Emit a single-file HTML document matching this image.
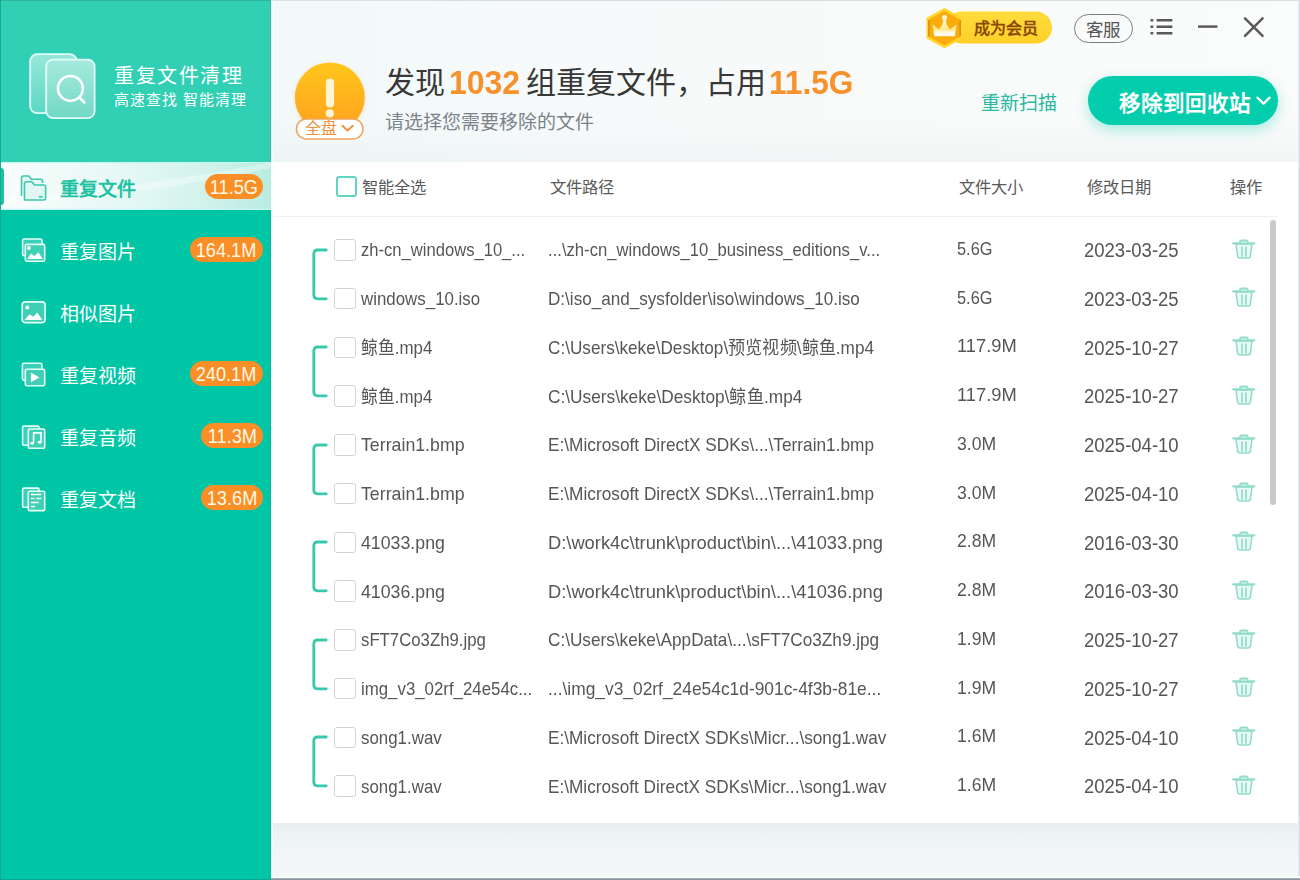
<!DOCTYPE html>
<html lang="zh-CN"><head><meta charset="utf-8">
<style>
*{margin:0;padding:0;box-sizing:border-box}
html,body{width:1300px;height:880px;overflow:hidden;font-family:"Liberation Sans",sans-serif}
body{position:relative;background:#f2f7f8}
.abs{position:absolute}
.t{position:absolute;white-space:nowrap;line-height:1}
.cb{position:absolute;width:21.5px;height:21.5px;border:1.2px solid #d4d4d4;border-radius:3px;background:#fff}
.badge{position:absolute;height:25px;border-radius:13px;background:#f98f26;color:#fff9e6;font-size:18px;line-height:25px;text-align:center}
.sy{transform:scaleY(1.07);transform-origin:0 0}
.badge span{display:inline-block;transform:translateY(1px) scale(1.01,1.1)}
.nav{position:absolute;left:60px;font-size:19px;color:#fff;line-height:1;white-space:nowrap}
</style></head><body>

<div class="abs" style="left:271px;top:0;width:1029px;height:162px;background:linear-gradient(90deg,#f2f9fa 0%,#f7fafa 35%,#f9fafa 70%,#fafbfb 100%)"></div>
<div class="abs" style="left:271px;top:120px;width:1029px;height:42px;background:linear-gradient(180deg,rgba(230,236,236,0) 0%,rgba(228,234,234,.3) 100%)"></div>
<div class="abs" style="left:271px;top:822px;width:1029px;height:58px;background:linear-gradient(180deg,#e8eef0 0%,#eef3f4 25%,#f2f6f7 60%,#f3f7f8 100%)"></div>
<div class="abs" style="left:271px;top:0;width:2px;height:880px;background:#fbfefe"></div>
<div class="abs" style="left:0;top:0;width:271px;height:880px;background:#01c6a6"></div>
<div class="abs" style="left:0;top:0;width:271px;height:162px;background:#31cfb4"></div>
<div class="abs" style="left:269.5px;top:0;width:1.5px;height:880px;background:rgba(0,120,100,.12)"></div>
<svg class="abs" style="left:26px;top:50px" width="74" height="74" viewBox="26 50 74 74">
<defs><linearGradient id="lg1" x1="0" y1="0" x2="0" y2="1"><stop offset="0" stop-color="#ffffff" stop-opacity=".5"/><stop offset="1" stop-color="#ffffff" stop-opacity=".2"/></linearGradient>
<linearGradient id="lg2" x1="0" y1="0" x2="0" y2="1"><stop offset="0" stop-color="#a6eadd"/><stop offset="1" stop-color="#72d9c6"/></linearGradient></defs>
<rect x="30.2" y="54.2" width="46.5" height="59" rx="7" fill="url(#lg1)" stroke="#dffff7" stroke-width="1.8"/>
<rect x="46.2" y="59.6" width="48.4" height="58.6" rx="7" fill="url(#lg2)" stroke="#e2fff8" stroke-width="1.8"/>
<circle cx="70.4" cy="88.4" r="12.4" fill="none" stroke="#fff" stroke-width="2.6"/>
<path d="M79.6 97.6 L84.2 102.4" stroke="#fff" stroke-width="2.8" stroke-linecap="round"/>
</svg>
<div class="t" style="left:114px;top:66px;font-size:20px;color:#fff;letter-spacing:1.5px;font-weight:500">重复文件清理</div>
<div class="t" style="left:114px;top:91.5px;font-size:15px;color:#fff;letter-spacing:1px;font-weight:500">高速查找 智能清理</div>
<div class="abs" style="left:0;top:162px;width:271px;height:48px;background:linear-gradient(90deg,#f8fdfc 0%,#e6f8f4 45%,#d2f3ec 75%,#b9ece1 100%)"></div>
<svg class="abs" style="left:0;top:162px" width="271" height="48" viewBox="0 0 271 48"><path d="M0 36 Q140 26 271 0 L271 6 Q150 32 0 44 Z" fill="#ffffff" opacity=".35"/><rect x="0" y="0" width="271" height="1.2" fill="#c9f6ee"/><rect x="0" y="46.8" width="271" height="1.2" fill="#c9f6ee"/></svg>
<div class="abs" style="left:0;top:168px;width:4px;height:37px;background:#1fbfa2;border-radius:0 3px 3px 0"></div>
<svg class="abs" style="left:19px;top:173px" width="30" height="30" viewBox="19 173 30 30">
<path d="M21.5 196 V178.3 Q21.5 176 23.5 176 H28.8 L31.5 179.3 H41 Q42.6 179.3 42.6 181 V183" fill="#e6f8f4" stroke="#3dc9ae" stroke-width="1.6" stroke-linejoin="round"/>
<path d="M24.5 200 V184 Q24.5 181.7 26.5 181.7 H31.8 L34.5 185 H44 Q45.6 185 45.6 186.7 V198.3 Q45.6 200 44 200 Z" fill="#e2f7f2" stroke="#3dc9ae" stroke-width="1.6" stroke-linejoin="round"/>
<path d="M38.8 196.8 H42.6" stroke="#3dc9ae" stroke-width="1.8"/>
</svg>
<div class="nav" style="top:180px;color:#1ec2a3;font-weight:bold">重复文件</div>
<div class="badge" style="left:205px;top:174px;width:58px"><span>11.5G</span></div>
<div class="nav" style="top:242.5px">重复图片</div>
<div class="badge" style="left:190px;top:237px;width:73px"><span>164.1M</span></div>
<div class="nav" style="top:304.5px">相似图片</div>
<div class="nav" style="top:366.5px">重复视频</div>
<div class="badge" style="left:190px;top:361px;width:73px"><span>240.1M</span></div>
<div class="nav" style="top:428.5px">重复音频</div>
<div class="badge" style="left:201px;top:423px;width:62px"><span>11.3M</span></div>
<div class="nav" style="top:490.5px">重复文档</div>
<div class="badge" style="left:201px;top:485px;width:62px"><span>13.6M</span></div>
<svg class="abs" style="left:18px;top:234px" width="32" height="32" viewBox="18 234 32 32">
<rect x="22.6" y="239" width="19.4" height="16.8" rx="1.6" stroke="#e4fff8" stroke-width="1.6" fill="rgba(255,255,255,.22)"/>
<rect x="25.3" y="244.4" width="19.4" height="16.8" rx="1.6" fill="#3fcfb4" stroke="#e4fff8" stroke-width="1.6"/>
<circle cx="28.9" cy="248" r="1.9" fill="#fff"/>
<path d="M27.3 259 L31.1 253.6 L34.5 256 L38.4 252.3 L42.7 259 Z" fill="#fff"/>
</svg>
<svg class="abs" style="left:18px;top:297px" width="32" height="30" viewBox="18 297 32 30">
<rect x="22.2" y="301.9" width="22.9" height="20.7" rx="3" fill="#3fcfb4" stroke="#e4fff8" stroke-width="1.6"/>
<circle cx="27.3" cy="307.5" r="2" fill="#fff"/>
<path d="M24.5 320 L29.5 314.3 L33.2 316.8 L37.3 312.5 L42.3 320 Z" fill="#fff"/>
</svg>
<svg class="abs" style="left:18px;top:358px" width="32" height="32" viewBox="18 358 32 32">
<rect x="22.4" y="363.3" width="19.5" height="17" rx="1.6" stroke="#e4fff8" stroke-width="1.6" fill="rgba(255,255,255,.22)"/>
<rect x="25.3" y="369.2" width="19.4" height="16.6" rx="1.6" fill="#3fcfb4" stroke="#e4fff8" stroke-width="1.6"/>
<path d="M30.9 372.6 L39.5 377.4 L30.9 382.2 Z" fill="#fff"/>
</svg>
<svg class="abs" style="left:18px;top:420px" width="32" height="32" viewBox="18 420 32 32">
<rect x="22.6" y="426.1" width="16.4" height="19.1" rx="1.4" stroke="#e4fff8" stroke-width="1.6" fill="rgba(255,255,255,.22)"/>
<rect x="28.3" y="429" width="16.4" height="19.3" rx="1.4" fill="#3fcfb4" stroke="#e4fff8" stroke-width="1.6"/>
<path d="M33.6 442.6 V432.9 H41 V441.8" fill="none" stroke="#fff" stroke-width="1.6"/>
<ellipse cx="32.1" cy="443.2" rx="1.9" ry="1.5" fill="#fff"/>
<ellipse cx="39.6" cy="442.3" rx="1.9" ry="1.5" fill="#fff"/>
</svg>
<svg class="abs" style="left:18px;top:482px" width="32" height="32" viewBox="18 482 32 32">
<rect x="22.6" y="488.1" width="16.4" height="19.1" rx="1.4" stroke="#e4fff8" stroke-width="1.6" fill="rgba(255,255,255,.22)"/>
<rect x="28.3" y="491.3" width="16.4" height="19.3" rx="1.4" fill="#3fcfb4" stroke="#e4fff8" stroke-width="1.6"/>
<path d="M31 494.6 H41.2 M31 498.5 H34.5 M36.4 498.5 H41.2 M31 502.6 H38.8 M31 506.6 H35" stroke="#fff" stroke-width="1.5"/>
</svg>
<svg class="abs" style="left:285px;top:52px" width="90" height="92" viewBox="285 52 90 92">
<defs>
<linearGradient id="og" x1="0" y1="0" x2="0" y2="1"><stop offset="0" stop-color="#ffc61c"/><stop offset="1" stop-color="#ffa01e"/></linearGradient>
<filter id="sh" x="-30%%" y="-30%%" width="160%%" height="160%%"><feGaussianBlur stdDeviation="2.5"/></filter>
</defs>
<circle cx="330" cy="98.5" r="35.5" fill="#f3c9a0" opacity=".35" filter="url(#sh)"/>
<circle cx="329.8" cy="97.4" r="35" fill="url(#og)"/>
<rect x="325.9" y="78.5" width="8.2" height="29" rx="4.1" fill="#fff4d6"/>
<circle cx="329.8" cy="113.4" r="4.1" fill="#fff4d6"/>
<rect x="296.4" y="118.9" width="66.6" height="20" rx="10" fill="#fff" stroke="#f0a458" stroke-width="1.5"/>
<path d="M342.4 125.8 L347.6 130.6 L352.8 125.8" fill="none" stroke="#ec9442" stroke-width="2" stroke-linecap="round" stroke-linejoin="round"/>
</svg>
<div class="t" style="left:305px;top:121px;font-size:16px;color:#ea9440">全盘</div>
<div class="t" style="left:385px;top:67.5px;font-size:30px;color:#383838">发现</div>
<div class="t" style="left:449px;top:65px;font-size:34px;color:#f7912b;font-weight:bold;transform:scaleX(.94);transform-origin:0 0">1032</div>
<div class="t" style="left:526px;top:67.5px;font-size:30px;color:#383838">组重复文件，占用</div>
<div class="t" style="left:769px;top:64.5px;font-size:34px;color:#f7912b;font-weight:bold;transform:scaleX(.93);transform-origin:0 0">11.5G</div>
<div class="t" style="left:385px;top:113px;font-size:19px;color:#7c838b">请选择您需要移除的文件</div>
<svg class="abs" style="left:922px;top:5px" width="134" height="46" viewBox="922 5 134 46">
<defs><linearGradient id="yg" x1="0" y1="0" x2="0" y2="1"><stop offset="0" stop-color="#ffdc3c"/><stop offset="1" stop-color="#fdd028"/></linearGradient>
<linearGradient id="cg" x1="0" y1="0" x2="0" y2="1"><stop offset="0" stop-color="#fff6d0"/><stop offset=".55" stop-color="#ffe98a"/><stop offset=".75" stop-color="#fffbea"/><stop offset="1" stop-color="#fffdf2"/></linearGradient></defs>
<rect x="946" y="11.5" width="106" height="32" rx="16" fill="url(#yg)"/>
<path d="M944.5 9.5 L961.2 18.6 V37.6 L944.5 46.8 L927.8 37.6 V18.6 Z" fill="#fbac0a" stroke="#ffd52e" stroke-width="2.6" stroke-linejoin="round"/>
<path d="M928.8 20 V36.4 M960.2 20 V36.4" stroke="#c77a08" stroke-width="1.3" opacity=".8"/>
<path d="M932.6 24.6 L939 29.4 L944.5 21.5 L950 29.4 L956.6 24.6 L954.8 36.2 H934.3 Z" fill="url(#cg)"/>
<path d="M943.2 18.5 L942.6 24 H946.4 L945.8 18.5 Z" fill="#fff6d0"/>
<circle cx="944.5" cy="17.6" r="2.5" fill="#fff6d0"/>
</svg>
<div class="t" style="left:974px;top:20.5px;font-size:16px;color:#8c4a08;font-weight:bold">成为会员</div>
<div class="abs" style="left:1074px;top:14px;width:58.5px;height:29px;border:1.8px solid #7d7d7d;border-radius:15px"></div>
<div class="t" style="left:1085.5px;top:21.5px;font-size:17.5px;color:#555">客服</div>
<svg class="abs" style="left:1146px;top:12px" width="124" height="30" viewBox="1146 12 124 30">
<path d="M1150.5 20.2 H1153.3 M1150.5 26.7 H1153.3 M1150.5 33.2 H1153.3" stroke="#5a5a5a" stroke-width="2.5"/>
<path d="M1156.6 20.2 H1172.4 M1156.6 26.7 H1172.4 M1156.6 33.2 H1172.4" stroke="#5a5a5a" stroke-width="2.5"/>
<path d="M1198 26.6 H1217.4" stroke="#5a5a5a" stroke-width="2.5"/>
<path d="M1245 18.3 L1262.6 35.8 M1262.6 18.3 L1245 35.8" stroke="#5a5a5a" stroke-width="2.5" stroke-linecap="round"/>
</svg>
<div class="t" style="left:981px;top:93.5px;font-size:19px;color:#2ab8a0">重新扫描</div>
<div class="abs" style="left:1088px;top:76px;width:190px;height:49px;border-radius:25px;background:#03cdac;box-shadow:0 5px 14px rgba(0,205,172,.33)"></div>
<div class="t" style="left:1119px;top:94px;font-size:21.5px;color:#fff;font-weight:bold">移除到回收站</div>
<svg class="abs" style="left:1254px;top:94px" width="20" height="14" viewBox="1254 94 20 14">
<path d="M1257.4 97.6 L1263.5 103.6 L1269.6 97.6" fill="none" stroke="#fff" stroke-width="2.2" stroke-linecap="round" stroke-linejoin="round"/>
</svg>
<div class="abs" style="left:273px;top:162px;width:1025px;height:661px;background:#fff"></div>
<div class="abs" style="left:273px;top:216px;width:1005px;height:1px;background:#f0f2f2"></div>
<div class="abs" style="left:336px;top:176px;width:21px;height:21px;border:2px solid #62d5c0;border-radius:3px;background:#fff"></div>
<div class="t" style="left:362px;top:179px;font-size:16.3px;color:#595959">智能全选</div>
<div class="t" style="left:550px;top:179px;font-size:16.3px;color:#595959">文件路径</div>
<div class="t" style="left:959px;top:179px;font-size:16.3px;color:#595959">文件大小</div>
<div class="t" style="left:1087px;top:179px;font-size:16.3px;color:#595959">修改日期</div>
<div class="t" style="left:1230px;top:179px;font-size:16.3px;color:#595959">操作</div>
<div class="abs" style="left:1270px;top:220px;width:6px;height:285px;border-radius:3px;background:#c9c9c9"></div>
<div class="cb" style="left:334px;top:239.1px"></div>
<div class="t" style="left:361px;top:241.3px;font-size:17px;color:#565656;transform:scale(0.976,1.07);transform-origin:0 0">zh-cn_windows_10_...</div>
<div class="t" style="left:548px;top:241.3px;font-size:17px;color:#565656;transform:scale(0.98,1.07);transform-origin:0 0">...\zh-cn_windows_10_business_editions_v...</div>
<div class="t" style="left:957px;top:239.8px;font-size:16.5px;color:#565656;transform:scale(0.991,1.07);transform-origin:0 0">5.6G</div>
<div class="t sy" style="left:1084px;top:241.0px;font-size:18.5px;color:#565656">2023-03-25</div>
<svg class="abs" style="left:1231px;top:237px" width="26" height="24" viewBox="0 0 26 24">
<path d="M4 9 L5.6 21 Q6 23 8 23 L16 23 Q18 23 18.4 21 L20 9 Z" transform="translate(1,-2)" fill="#e9fbf7" stroke="#93dbca" stroke-width="1.6" stroke-linejoin="round"/>
<path d="M2.2 6.3 H23.3" stroke="#93dbca" stroke-width="2.2" stroke-linecap="round"/>
<path d="M9 6 V4.6 Q9 3.3 10.3 3.3 H15.4 Q16.7 3.3 16.7 4.6 V6" fill="#b9ece0" stroke="#93dbca" stroke-width="1.6"/>
<path d="M11 10 V19 M14.9 10 V19" stroke="#93dbca" stroke-width="1.7" stroke-linecap="round"/>
</svg>
<svg class="abs" style="left:308px;top:246.6px" width="24" height="54.8" viewBox="0 0 24 54.8"><path d="M18.2 3 H9.5 Q5.8 3 5.8 6.8 V48.0 Q5.8 51.8 9.5 51.8 H18.2" fill="none" stroke="#3ac8ac" stroke-width="2.8" stroke-linecap="round"/></svg>
<div class="cb" style="left:334px;top:287.9px"></div>
<div class="t" style="left:361px;top:290.1px;font-size:17px;color:#565656;transform:scale(0.993,1.07);transform-origin:0 0">windows_10.iso</div>
<div class="t" style="left:548px;top:290.1px;font-size:17px;color:#565656;transform:scale(1.006,1.07);transform-origin:0 0">D:\iso_and_sysfolder\iso\windows_10.iso</div>
<div class="t" style="left:957px;top:288.6px;font-size:16.5px;color:#565656;transform:scale(0.991,1.07);transform-origin:0 0">5.6G</div>
<div class="t sy" style="left:1084px;top:289.8px;font-size:18.5px;color:#565656">2023-03-25</div>
<svg class="abs" style="left:1231px;top:285px" width="26" height="24" viewBox="0 0 26 24">
<path d="M4 9 L5.6 21 Q6 23 8 23 L16 23 Q18 23 18.4 21 L20 9 Z" transform="translate(1,-2)" fill="#e9fbf7" stroke="#93dbca" stroke-width="1.6" stroke-linejoin="round"/>
<path d="M2.2 6.3 H23.3" stroke="#93dbca" stroke-width="2.2" stroke-linecap="round"/>
<path d="M9 6 V4.6 Q9 3.3 10.3 3.3 H15.4 Q16.7 3.3 16.7 4.6 V6" fill="#b9ece0" stroke="#93dbca" stroke-width="1.6"/>
<path d="M11 10 V19 M14.9 10 V19" stroke="#93dbca" stroke-width="1.7" stroke-linecap="round"/>
</svg>
<div class="cb" style="left:334px;top:336.6px"></div>
<div class="t" style="left:361px;top:338.8px;font-size:17px;color:#565656;transform:scale(0.994,1.07);transform-origin:0 0">鲸鱼.mp4</div>
<div class="t" style="left:548px;top:338.8px;font-size:17px;color:#565656;transform:scale(1.009,1.07);transform-origin:0 0">C:\Users\keke\Desktop\预览视频\鲸鱼.mp4</div>
<div class="t" style="left:957px;top:337.3px;font-size:16.5px;color:#565656;transform:scale(1.11,1.07);transform-origin:0 0">117.9M</div>
<div class="t sy" style="left:1084px;top:338.5px;font-size:18.5px;color:#565656">2025-10-27</div>
<svg class="abs" style="left:1231px;top:334px" width="26" height="24" viewBox="0 0 26 24">
<path d="M4 9 L5.6 21 Q6 23 8 23 L16 23 Q18 23 18.4 21 L20 9 Z" transform="translate(1,-2)" fill="#e9fbf7" stroke="#93dbca" stroke-width="1.6" stroke-linejoin="round"/>
<path d="M2.2 6.3 H23.3" stroke="#93dbca" stroke-width="2.2" stroke-linecap="round"/>
<path d="M9 6 V4.6 Q9 3.3 10.3 3.3 H15.4 Q16.7 3.3 16.7 4.6 V6" fill="#b9ece0" stroke="#93dbca" stroke-width="1.6"/>
<path d="M11 10 V19 M14.9 10 V19" stroke="#93dbca" stroke-width="1.7" stroke-linecap="round"/>
</svg>
<svg class="abs" style="left:308px;top:344.1px" width="24" height="54.8" viewBox="0 0 24 54.8"><path d="M18.2 3 H9.5 Q5.8 3 5.8 6.8 V48.0 Q5.8 51.8 9.5 51.8 H18.2" fill="none" stroke="#3ac8ac" stroke-width="2.8" stroke-linecap="round"/></svg>
<div class="cb" style="left:334px;top:385.4px"></div>
<div class="t" style="left:361px;top:387.6px;font-size:17px;color:#565656;transform:scale(0.994,1.07);transform-origin:0 0">鲸鱼.mp4</div>
<div class="t" style="left:548px;top:387.6px;font-size:17px;color:#565656;transform:scale(1.016,1.07);transform-origin:0 0">C:\Users\keke\Desktop\鲸鱼.mp4</div>
<div class="t" style="left:957px;top:386.1px;font-size:16.5px;color:#565656;transform:scale(1.11,1.07);transform-origin:0 0">117.9M</div>
<div class="t sy" style="left:1084px;top:387.2px;font-size:18.5px;color:#565656">2025-10-27</div>
<svg class="abs" style="left:1231px;top:383px" width="26" height="24" viewBox="0 0 26 24">
<path d="M4 9 L5.6 21 Q6 23 8 23 L16 23 Q18 23 18.4 21 L20 9 Z" transform="translate(1,-2)" fill="#e9fbf7" stroke="#93dbca" stroke-width="1.6" stroke-linejoin="round"/>
<path d="M2.2 6.3 H23.3" stroke="#93dbca" stroke-width="2.2" stroke-linecap="round"/>
<path d="M9 6 V4.6 Q9 3.3 10.3 3.3 H15.4 Q16.7 3.3 16.7 4.6 V6" fill="#b9ece0" stroke="#93dbca" stroke-width="1.6"/>
<path d="M11 10 V19 M14.9 10 V19" stroke="#93dbca" stroke-width="1.7" stroke-linecap="round"/>
</svg>
<div class="cb" style="left:334px;top:434.1px"></div>
<div class="t" style="left:361px;top:436.3px;font-size:17px;color:#565656;transform:scale(1.044,1.07);transform-origin:0 0">Terrain1.bmp</div>
<div class="t" style="left:548px;top:436.3px;font-size:17px;color:#565656;transform:scale(1.015,1.07);transform-origin:0 0">E:\Microsoft DirectX SDKs\...\Terrain1.bmp</div>
<div class="t" style="left:957px;top:434.8px;font-size:16.5px;color:#565656;transform:scale(1.068,1.07);transform-origin:0 0">3.0M</div>
<div class="t sy" style="left:1084px;top:436.0px;font-size:18.5px;color:#565656">2025-04-10</div>
<svg class="abs" style="left:1231px;top:432px" width="26" height="24" viewBox="0 0 26 24">
<path d="M4 9 L5.6 21 Q6 23 8 23 L16 23 Q18 23 18.4 21 L20 9 Z" transform="translate(1,-2)" fill="#e9fbf7" stroke="#93dbca" stroke-width="1.6" stroke-linejoin="round"/>
<path d="M2.2 6.3 H23.3" stroke="#93dbca" stroke-width="2.2" stroke-linecap="round"/>
<path d="M9 6 V4.6 Q9 3.3 10.3 3.3 H15.4 Q16.7 3.3 16.7 4.6 V6" fill="#b9ece0" stroke="#93dbca" stroke-width="1.6"/>
<path d="M11 10 V19 M14.9 10 V19" stroke="#93dbca" stroke-width="1.7" stroke-linecap="round"/>
</svg>
<svg class="abs" style="left:308px;top:441.6px" width="24" height="54.8" viewBox="0 0 24 54.8"><path d="M18.2 3 H9.5 Q5.8 3 5.8 6.8 V48.0 Q5.8 51.8 9.5 51.8 H18.2" fill="none" stroke="#3ac8ac" stroke-width="2.8" stroke-linecap="round"/></svg>
<div class="cb" style="left:334px;top:482.9px"></div>
<div class="t" style="left:361px;top:485.1px;font-size:17px;color:#565656;transform:scale(1.044,1.07);transform-origin:0 0">Terrain1.bmp</div>
<div class="t" style="left:548px;top:485.1px;font-size:17px;color:#565656;transform:scale(1.015,1.07);transform-origin:0 0">E:\Microsoft DirectX SDKs\...\Terrain1.bmp</div>
<div class="t" style="left:957px;top:483.6px;font-size:16.5px;color:#565656;transform:scale(1.068,1.07);transform-origin:0 0">3.0M</div>
<div class="t sy" style="left:1084px;top:484.8px;font-size:18.5px;color:#565656">2025-04-10</div>
<svg class="abs" style="left:1231px;top:480px" width="26" height="24" viewBox="0 0 26 24">
<path d="M4 9 L5.6 21 Q6 23 8 23 L16 23 Q18 23 18.4 21 L20 9 Z" transform="translate(1,-2)" fill="#e9fbf7" stroke="#93dbca" stroke-width="1.6" stroke-linejoin="round"/>
<path d="M2.2 6.3 H23.3" stroke="#93dbca" stroke-width="2.2" stroke-linecap="round"/>
<path d="M9 6 V4.6 Q9 3.3 10.3 3.3 H15.4 Q16.7 3.3 16.7 4.6 V6" fill="#b9ece0" stroke="#93dbca" stroke-width="1.6"/>
<path d="M11 10 V19 M14.9 10 V19" stroke="#93dbca" stroke-width="1.7" stroke-linecap="round"/>
</svg>
<div class="cb" style="left:334px;top:531.6px"></div>
<div class="t" style="left:361px;top:533.8px;font-size:17px;color:#565656;transform:scale(1.044,1.07);transform-origin:0 0">41033.png</div>
<div class="t" style="left:548px;top:533.8px;font-size:17px;color:#565656;transform:scale(1.077,1.07);transform-origin:0 0">D:\work4c\trunk\product\bin\...\41033.png</div>
<div class="t" style="left:957px;top:532.3px;font-size:16.5px;color:#565656;transform:scale(1.065,1.07);transform-origin:0 0">2.8M</div>
<div class="t sy" style="left:1084px;top:533.5px;font-size:18.5px;color:#565656">2016-03-30</div>
<svg class="abs" style="left:1231px;top:529px" width="26" height="24" viewBox="0 0 26 24">
<path d="M4 9 L5.6 21 Q6 23 8 23 L16 23 Q18 23 18.4 21 L20 9 Z" transform="translate(1,-2)" fill="#e9fbf7" stroke="#93dbca" stroke-width="1.6" stroke-linejoin="round"/>
<path d="M2.2 6.3 H23.3" stroke="#93dbca" stroke-width="2.2" stroke-linecap="round"/>
<path d="M9 6 V4.6 Q9 3.3 10.3 3.3 H15.4 Q16.7 3.3 16.7 4.6 V6" fill="#b9ece0" stroke="#93dbca" stroke-width="1.6"/>
<path d="M11 10 V19 M14.9 10 V19" stroke="#93dbca" stroke-width="1.7" stroke-linecap="round"/>
</svg>
<svg class="abs" style="left:308px;top:539.1px" width="24" height="54.8" viewBox="0 0 24 54.8"><path d="M18.2 3 H9.5 Q5.8 3 5.8 6.8 V48.0 Q5.8 51.8 9.5 51.8 H18.2" fill="none" stroke="#3ac8ac" stroke-width="2.8" stroke-linecap="round"/></svg>
<div class="cb" style="left:334px;top:580.4px"></div>
<div class="t" style="left:361px;top:582.6px;font-size:17px;color:#565656;transform:scale(1.044,1.07);transform-origin:0 0">41036.png</div>
<div class="t" style="left:548px;top:582.6px;font-size:17px;color:#565656;transform:scale(1.077,1.07);transform-origin:0 0">D:\work4c\trunk\product\bin\...\41036.png</div>
<div class="t" style="left:957px;top:581.1px;font-size:16.5px;color:#565656;transform:scale(1.065,1.07);transform-origin:0 0">2.8M</div>
<div class="t sy" style="left:1084px;top:582.2px;font-size:18.5px;color:#565656">2016-03-30</div>
<svg class="abs" style="left:1231px;top:578px" width="26" height="24" viewBox="0 0 26 24">
<path d="M4 9 L5.6 21 Q6 23 8 23 L16 23 Q18 23 18.4 21 L20 9 Z" transform="translate(1,-2)" fill="#e9fbf7" stroke="#93dbca" stroke-width="1.6" stroke-linejoin="round"/>
<path d="M2.2 6.3 H23.3" stroke="#93dbca" stroke-width="2.2" stroke-linecap="round"/>
<path d="M9 6 V4.6 Q9 3.3 10.3 3.3 H15.4 Q16.7 3.3 16.7 4.6 V6" fill="#b9ece0" stroke="#93dbca" stroke-width="1.6"/>
<path d="M11 10 V19 M14.9 10 V19" stroke="#93dbca" stroke-width="1.7" stroke-linecap="round"/>
</svg>
<div class="cb" style="left:334px;top:629.1px"></div>
<div class="t" style="left:361px;top:631.3px;font-size:17px;color:#565656;transform:scale(0.986,1.07);transform-origin:0 0">sFT7Co3Zh9.jpg</div>
<div class="t" style="left:548px;top:631.3px;font-size:17px;color:#565656;transform:scale(1.01,1.07);transform-origin:0 0">C:\Users\keke\AppData\...\sFT7Co3Zh9.jpg</div>
<div class="t" style="left:957px;top:629.8px;font-size:16.5px;color:#565656;transform:scale(1.065,1.07);transform-origin:0 0">1.9M</div>
<div class="t sy" style="left:1084px;top:631.0px;font-size:18.5px;color:#565656">2025-10-27</div>
<svg class="abs" style="left:1231px;top:627px" width="26" height="24" viewBox="0 0 26 24">
<path d="M4 9 L5.6 21 Q6 23 8 23 L16 23 Q18 23 18.4 21 L20 9 Z" transform="translate(1,-2)" fill="#e9fbf7" stroke="#93dbca" stroke-width="1.6" stroke-linejoin="round"/>
<path d="M2.2 6.3 H23.3" stroke="#93dbca" stroke-width="2.2" stroke-linecap="round"/>
<path d="M9 6 V4.6 Q9 3.3 10.3 3.3 H15.4 Q16.7 3.3 16.7 4.6 V6" fill="#b9ece0" stroke="#93dbca" stroke-width="1.6"/>
<path d="M11 10 V19 M14.9 10 V19" stroke="#93dbca" stroke-width="1.7" stroke-linecap="round"/>
</svg>
<svg class="abs" style="left:308px;top:636.6px" width="24" height="54.8" viewBox="0 0 24 54.8"><path d="M18.2 3 H9.5 Q5.8 3 5.8 6.8 V48.0 Q5.8 51.8 9.5 51.8 H18.2" fill="none" stroke="#3ac8ac" stroke-width="2.8" stroke-linecap="round"/></svg>
<div class="cb" style="left:334px;top:677.9px"></div>
<div class="t" style="left:361px;top:680.1px;font-size:17px;color:#565656;transform:scale(0.99,1.07);transform-origin:0 0">img_v3_02rf_24e54c...</div>
<div class="t" style="left:548px;top:680.1px;font-size:17px;color:#565656;transform:scale(1.022,1.07);transform-origin:0 0">...\img_v3_02rf_24e54c1d-901c-4f3b-81e...</div>
<div class="t" style="left:957px;top:678.6px;font-size:16.5px;color:#565656;transform:scale(1.065,1.07);transform-origin:0 0">1.9M</div>
<div class="t sy" style="left:1084px;top:679.8px;font-size:18.5px;color:#565656">2025-10-27</div>
<svg class="abs" style="left:1231px;top:675px" width="26" height="24" viewBox="0 0 26 24">
<path d="M4 9 L5.6 21 Q6 23 8 23 L16 23 Q18 23 18.4 21 L20 9 Z" transform="translate(1,-2)" fill="#e9fbf7" stroke="#93dbca" stroke-width="1.6" stroke-linejoin="round"/>
<path d="M2.2 6.3 H23.3" stroke="#93dbca" stroke-width="2.2" stroke-linecap="round"/>
<path d="M9 6 V4.6 Q9 3.3 10.3 3.3 H15.4 Q16.7 3.3 16.7 4.6 V6" fill="#b9ece0" stroke="#93dbca" stroke-width="1.6"/>
<path d="M11 10 V19 M14.9 10 V19" stroke="#93dbca" stroke-width="1.7" stroke-linecap="round"/>
</svg>
<div class="cb" style="left:334px;top:726.6px"></div>
<div class="t" style="left:361px;top:728.8px;font-size:17px;color:#565656;transform:scale(0.993,1.07);transform-origin:0 0">song1.wav</div>
<div class="t" style="left:548px;top:728.8px;font-size:17px;color:#565656;transform:scale(1.012,1.07);transform-origin:0 0">E:\Microsoft DirectX SDKs\Micr...\song1.wav</div>
<div class="t" style="left:957px;top:727.3px;font-size:16.5px;color:#565656;transform:scale(1.065,1.07);transform-origin:0 0">1.6M</div>
<div class="t sy" style="left:1084px;top:728.5px;font-size:18.5px;color:#565656">2025-04-10</div>
<svg class="abs" style="left:1231px;top:724px" width="26" height="24" viewBox="0 0 26 24">
<path d="M4 9 L5.6 21 Q6 23 8 23 L16 23 Q18 23 18.4 21 L20 9 Z" transform="translate(1,-2)" fill="#e9fbf7" stroke="#93dbca" stroke-width="1.6" stroke-linejoin="round"/>
<path d="M2.2 6.3 H23.3" stroke="#93dbca" stroke-width="2.2" stroke-linecap="round"/>
<path d="M9 6 V4.6 Q9 3.3 10.3 3.3 H15.4 Q16.7 3.3 16.7 4.6 V6" fill="#b9ece0" stroke="#93dbca" stroke-width="1.6"/>
<path d="M11 10 V19 M14.9 10 V19" stroke="#93dbca" stroke-width="1.7" stroke-linecap="round"/>
</svg>
<svg class="abs" style="left:308px;top:734.1px" width="24" height="54.8" viewBox="0 0 24 54.8"><path d="M18.2 3 H9.5 Q5.8 3 5.8 6.8 V48.0 Q5.8 51.8 9.5 51.8 H18.2" fill="none" stroke="#3ac8ac" stroke-width="2.8" stroke-linecap="round"/></svg>
<div class="cb" style="left:334px;top:775.4px"></div>
<div class="t" style="left:361px;top:777.6px;font-size:17px;color:#565656;transform:scale(0.993,1.07);transform-origin:0 0">song1.wav</div>
<div class="t" style="left:548px;top:777.6px;font-size:17px;color:#565656;transform:scale(1.012,1.07);transform-origin:0 0">E:\Microsoft DirectX SDKs\Micr...\song1.wav</div>
<div class="t" style="left:957px;top:776.1px;font-size:16.5px;color:#565656;transform:scale(1.065,1.07);transform-origin:0 0">1.6M</div>
<div class="t sy" style="left:1084px;top:777.2px;font-size:18.5px;color:#565656">2025-04-10</div>
<svg class="abs" style="left:1231px;top:773px" width="26" height="24" viewBox="0 0 26 24">
<path d="M4 9 L5.6 21 Q6 23 8 23 L16 23 Q18 23 18.4 21 L20 9 Z" transform="translate(1,-2)" fill="#e9fbf7" stroke="#93dbca" stroke-width="1.6" stroke-linejoin="round"/>
<path d="M2.2 6.3 H23.3" stroke="#93dbca" stroke-width="2.2" stroke-linecap="round"/>
<path d="M9 6 V4.6 Q9 3.3 10.3 3.3 H15.4 Q16.7 3.3 16.7 4.6 V6" fill="#b9ece0" stroke="#93dbca" stroke-width="1.6"/>
<path d="M11 10 V19 M14.9 10 V19" stroke="#93dbca" stroke-width="1.7" stroke-linecap="round"/>
</svg>
<div class="abs" style="left:0;top:0;width:1300px;height:1px;background:#d9e1e6"></div>
<div class="abs" style="left:0;top:0;width:271px;height:1px;background:#2db69f"></div>
<div class="abs" style="left:1298px;top:0;width:2px;height:880px;background:linear-gradient(90deg,#f4f6f7,#c9d1d6)"></div>
<div class="abs" style="left:271px;top:876px;width:1029px;height:2px;background:#fbfcfc"></div>
<div class="abs" style="left:271px;top:878px;width:1029px;height:2px;background:linear-gradient(180deg,#b0b9c1,#7f8a94)"></div>
<div class="abs" style="left:0;top:879px;width:271px;height:1px;background:#0aa995"></div>
<div class="abs" style="left:0;top:0;width:1px;height:880px;background:#15aa98"></div>
</body></html>
